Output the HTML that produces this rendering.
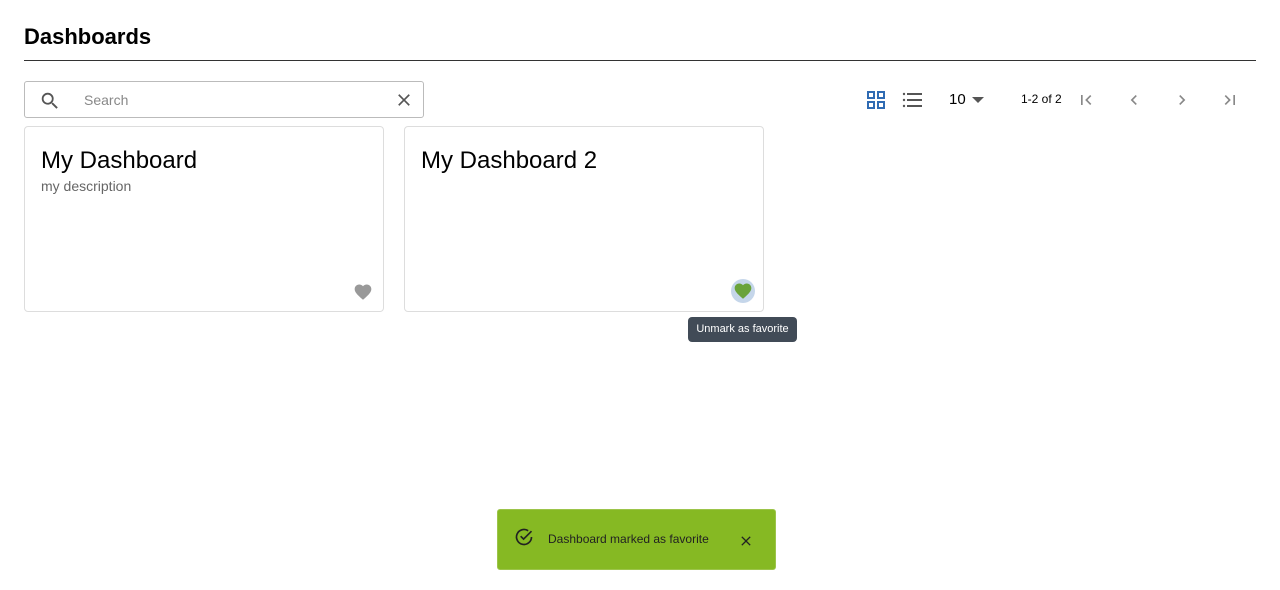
<!DOCTYPE html>
<html><head><meta charset="utf-8"><style>
*{box-sizing:border-box;margin:0;padding:0}
body{width:1280px;height:590px;background:#fff;font-family:"Liberation Sans",sans-serif;position:relative;overflow:hidden;color:#000}
.abs{position:absolute}
h1{position:absolute;left:24px;top:24px;font-size:22px;font-weight:bold}
.rule{left:24px;top:60px;width:1232px;height:1px;background:#333}
.search{left:24px;top:81px;width:400px;height:37px;border:1px solid #bbb;border-radius:3px}
.card{width:360px;height:186px;border:1px solid #ddd;border-radius:4px;top:126px}
.card .t{position:absolute;left:16px;top:20px;font-size:24px;font-weight:500}
.card .d{position:absolute;left:16px;top:51px;font-size:14px;color:#666}
.tip{left:688px;top:317px;width:109px;height:25px;background:#414b57;color:#fff;font-size:11px;border-radius:4px;text-align:center;line-height:25px}
.toast{left:497px;top:509px;width:279px;height:61px;background:#86b923;border:1px solid #9cc44a;border-radius:3px}
</style></head><body>
<h1>Dashboards</h1>
<div class="abs rule"></div>
<div class="abs search">
<svg class="abs" style="left:14px;top:8px" width="22" height="22" viewBox="0 0 24 24"><path fill="#555" d="M15.5 14h-.79l-.28-.27A6.47 6.47 0 0016 9.5 6.5 6.5 0 109.5 16c1.610 0 3.09-.59 4.23-1.57l.27.28v.79l5 4.99L20.49 19l-4.99-5zm-6 0C7.01 14 5 11.99 5 9.5S7.01 5 9.5 5 14 7.01 14 9.5 11.99 14 9.5 14z"/></svg>
<div class="abs" style="left:59px;top:10px;font-size:14px;color:#888">Search</div>
<svg class="abs" style="left:369px;top:8px" width="20" height="20" viewBox="0 0 24 24"><path fill="#555" d="M19 6.41L17.59 5 12 10.59 6.41 5 5 6.41 10.59 12 5 17.59 6.41 19 12 13.410 17.59 19 19 17.59 13.41 12z"/></svg>
</div>
<svg class="abs" style="left:866px;top:90px" width="20" height="20" viewBox="0 0 20 20"><g fill="none" stroke="#2f6bb3" stroke-width="2"><rect x="2" y="2" width="6" height="6"/><rect x="12" y="2" width="6" height="6"/><rect x="2" y="12" width="6" height="6"/><rect x="12" y="12" width="6" height="6"/></g></svg>
<svg class="abs" style="left:902px;top:90px" width="20" height="20" viewBox="0 0 20 20"><g fill="#555"><circle cx="2" cy="4" r="1.2"/><circle cx="2" cy="10" r="1.2"/><circle cx="2" cy="16" r="1.2"/><rect x="5" y="3" width="15" height="2"/><rect x="5" y="9" width="15" height="2"/><rect x="5" y="15" width="15" height="2"/></g></svg>
<div class="abs" style="left:949px;top:91px;font-size:15px">10</div>
<svg class="abs" style="left:972px;top:97px" width="12" height="6"><path d="M0 0h12L6 6z" fill="#555"/></svg>
<div class="abs" style="left:1021px;top:92px;font-size:12px">1-2 of 2</div>
<svg class="abs" style="left:1076px;top:90px" width="20" height="20" viewBox="0 0 24 24"><path fill="#888" d="M18.41 16.59L13.82 12l4.59-4.59L17 6l-6 6 6 6zM6 6h2v12H6z"/></svg>
<svg class="abs" style="left:1124px;top:90px" width="20" height="20" viewBox="0 0 24 24"><path fill="#888" d="M15.41 7.41L14 6l-6 6 6 6 1.41-1.41L10.83 12z"/></svg>
<svg class="abs" style="left:1172px;top:90px" width="20" height="20" viewBox="0 0 24 24"><path fill="#888" d="M10 6L8.59 7.41 13.17 12l-4.58 4.59L10 18l6-6z"/></svg>
<svg class="abs" style="left:1220px;top:90px" width="20" height="20" viewBox="0 0 24 24"><path fill="#888" d="M5.59 7.41L10.18 12l-4.59 4.59L7 18l6-6-6-6zM16 6h2v12h-2z"/></svg>
<div class="abs card" style="left:24px"><div class="t">My Dashboard</div><div class="d">my description</div>
<svg class="abs" style="left:328px;top:155px" width="20" height="20" viewBox="0 0 24 24"><path fill="#999" d="M12 21.35l-1.45-1.32C5.4 15.36 2 12.28 2 8.5 2 5.42 4.42 3 7.5 3c1.74 0 3.41.81 4.5 2.09C13.09 3.81 14.76 3 16.5 3 19.58 3 22 5.42 22 8.5c0 3.78-3.4 6.86-8.55 11.54z"/></svg></div>
<div class="abs card" style="left:404px"><div class="t">My Dashboard 2</div>
<div class="abs" style="left:326px;top:152px;width:24px;height:24px;border-radius:50%;background:#c5d6ea"></div>
<svg class="abs" style="left:328px;top:154px" width="20" height="20" viewBox="0 0 24 24"><path fill="#6aa33a" d="M12 21.35l-1.45-1.32C5.4 15.36 2 12.28 2 8.5 2 5.42 4.42 3 7.5 3c1.74 0 3.41.81 4.5 2.09C13.09 3.81 14.76 3 16.5 3 19.58 3 22 5.42 22 8.5c0 3.78-3.4 6.86-8.55 11.54z"/></svg></div>
<div class="abs tip">Unmark as favorite</div>
<div class="abs toast">
<svg class="abs" style="left:16px;top:17px" width="20" height="20" viewBox="0 0 24 24"><path fill="none" stroke="#222" stroke-width="2" d="M21 12a9 9 0 11-4-7.5"/><path fill="none" stroke="#222" stroke-width="2" d="M8 11l3.5 3.5L21 5"/></svg>
<div class="abs" style="left:50px;top:22px;font-size:12px;color:#222">Dashboard marked as favorite</div>
<svg class="abs" style="left:240px;top:23px" width="16" height="16" viewBox="0 0 24 24"><path fill="#222" d="M19 6.41L17.59 5 12 10.59 6.41 5 5 6.41 10.59 12 5 17.59 6.41 19 12 13.41 17.59 19 19 17.59 13.41 12z"/></svg>
</div>
</body></html>
